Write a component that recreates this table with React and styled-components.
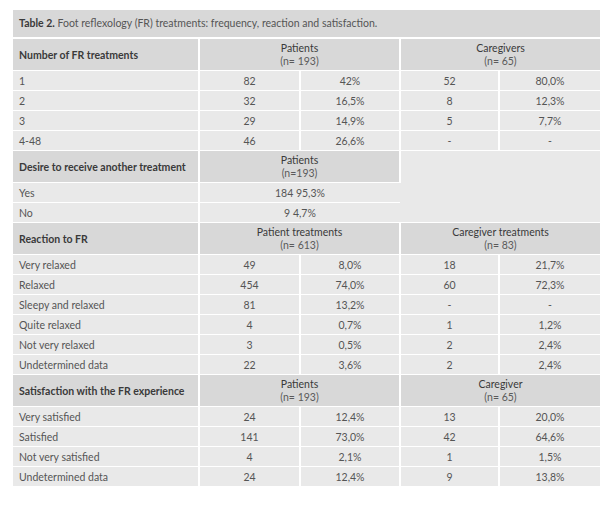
import React from 'react';
import styled, {createGlobalStyle} from 'styled-components';

const GlobalStyle = createGlobalStyle`
    body
    {
        margin: 0;
        background: #fff;
        font-family: Lato, "Open Sans", sans-serif;
    }
`;

const widths = [186, 101, 100, 99, 101];

const sections = [
    {
        title: 'Number of FR treatments',
        groups: [['Patients', '(n= 193)'], ['Caregivers', '(n= 65)']],
        rows: [
            ['1', '82', '42%', '52', '80,0%'],
            ['2', '32', '16,5%', '8', '12,3%'],
            ['3', '29', '14,9%', '5', '7,7%'],
            ['4-48', '46', '26,6%', '-', '-'],
        ],
    },
    {
        title: 'Desire to receive another treatment',
        groups: [['Patients', '(n=193)']],
        rows: [
            ['Yes', '184 95,3%'],
            ['No', '9 4,7%'],
        ],
    },
    {
        title: 'Reaction to FR',
        groups: [['Patient treatments', '(n= 613)'], ['Caregiver treatments', '(n= 83)']],
        rows: [
            ['Very relaxed', '49', '8,0%', '18', '21,7%'],
            ['Relaxed', '454', '74,0%', '60', '72,3%'],
            ['Sleepy and relaxed', '81', '13,2%', '-', '-'],
            ['Quite relaxed', '4', '0,7%', '1', '1,2%'],
            ['Not very relaxed', '3', '0,5%', '2', '2,4%'],
            ['Undetermined data', '22', '3,6%', '2', '2,4%'],
        ],
    },
    {
        title: 'Satisfaction with the FR experience',
        groups: [['Patients', '(n= 193)'], ['Caregiver', '(n= 65)']],
        rows: [
            ['Very satisfied', '24', '12,4%', '13', '20,0%'],
            ['Satisfied', '141', '73,0%', '42', '64,6%'],
            ['Not very satisfied', '4', '2,1%', '1', '1,5%'],
            ['Undetermined data', '24', '12,4%', '9', '13,8%'],
        ],
    },
];

function Section({section})
{
    const single = section.groups.length === 1;
    return (
        <>
            <tr>
                <HeadLabel>{section.title}</HeadLabel>
                {section.groups.map(([name, n]) => (
                    <GroupCell key={name} colSpan={2}>
                        {name}
                        <small>{n}</small>
                    </GroupCell>
                ))}
                {single && <Blank colSpan={2} rowSpan={section.rows.length + 1}/>}
            </tr>
            {section.rows.map(row => (
                <tr key={row[0]}>
                    <Label>{row[0]}</Label>
                    {single
                        ? <Value colSpan={2}>{row[1]}</Value>
                        : row.slice(1).map((v, i) => <Value key={i}>{v}</Value>)}
                </tr>
            ))}
        </>
    );
}

export default function App()
{
    return (
        <>
            <GlobalStyle/>
            <Page>
                <Caption><b>Table 2.</b> Foot reflexology (FR) treatments: frequency, reaction and satisfaction.</Caption>
                <Table>
                    <colgroup>
                        {widths.map((w, i) => <Col key={i} $w={w}/>)}
                    </colgroup>
                    <tbody>
                        {sections.map(s => <Section key={s.title} section={s}/>)}
                    </tbody>
                </Table>
            </Page>
        </>
    );
}

const Page = styled.div`
    padding: 10px 0 0 13px;
    width: 587px;
`;

const Caption = styled.div`
    height: 27px;
    line-height: 27px;
    padding-left: 6px;
    margin-bottom: 2px;
    background-color: #d8d8d8;
    color: #555;
    font-size: 10.5px;

    b
    {
        font-weight: 700;
        color: #3a3a3a;
    }
`;

const Col = styled.col`
    width: ${p => p.$w}px;
`;

const Table = styled.table`
    width: 587px;
    table-layout: fixed;
    border-collapse: collapse;
    font-size: 10.5px;

    td
    {
        padding: 0;
        border-right: 2px solid #fff;
        border-bottom: 1px solid #fff;
        white-space: nowrap;
    }

    td:last-child
    {
        border-right: none;
    }
`;

const HeadLabel = styled.td`
    height: 31px;
    && { padding-left: 6px; }
    background-color: #d8d8d8;
    color: #3a3a3a;
    font-weight: 700;
`;

const GroupCell = styled.td`
    background-color: #d8d8d8;
    color: #3a3a3a;
    text-align: center;
    line-height: 13px;

    small
    {
        display: block;
        font-size: 10.5px;
        color: #5a5a5a;
    }
`;

const Blank = styled.td`
    background-color: #e9e9e9;
`;

const Label = styled.td`
    height: 19px;
    && { padding-left: 6px; }
    background-color: #e9e9e9;
    color: #555;
`;

const Value = styled.td`
    background-color: #e9e9e9;
    color: #555;
    text-align: center;
`;
